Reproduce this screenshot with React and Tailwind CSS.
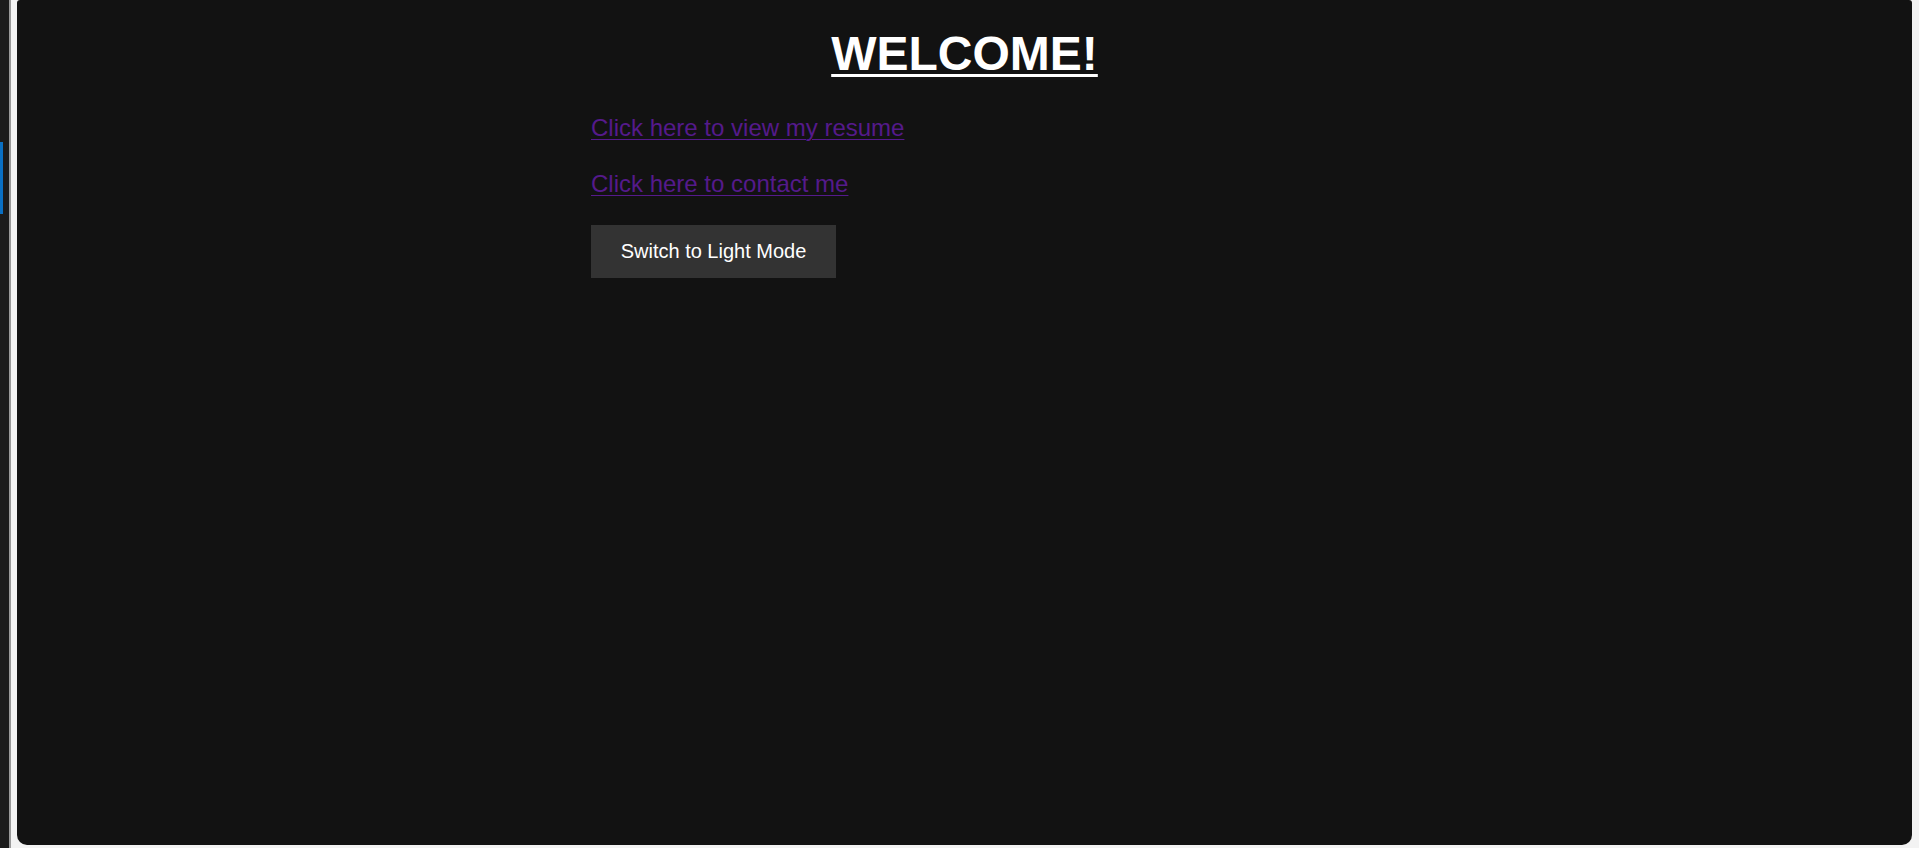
import React, { useState } from 'react';

const App = () => {
  const [dark, setDark] = useState(true);

  return (
    <div className="flex h-[848px] w-full overflow-hidden bg-[#1b1b1b] font-['Liberation_Sans',Arial,sans-serif]">
      <div className="relative w-[9px] shrink-0 bg-[#1b1b1b]">
        <div className="absolute left-0 top-[142px] h-[72px] w-[3px] bg-[#0a6fc2]" />
      </div>
      <div className="flex min-w-0 flex-1 border-l-2 border-[#9a9a9a] bg-[#f3f3f3] pb-[3px] pl-[6px] pr-[7px]">
        <div
          className={`flex flex-1 flex-col rounded-b-[10px] rounded-t-[3px] pt-[30px] ${
            dark ? 'bg-[#121212] text-white' : 'bg-white text-black'
          }`}
        >
          <h1 className="text-center text-[48px] font-bold leading-[48px] underline decoration-[3px] underline-offset-[4px]">
            WELCOME!
          </h1>
          <div className="flex flex-col items-start pl-[574px]">
            <a href="#resume" className="mt-[34px] text-[24px] leading-[32px] text-[#551a8b] underline decoration-1 underline-offset-[3px]">
              Click here to view my resume
            </a>
            <a href="#contact" className="mt-[24px] text-[24px] leading-[32px] text-[#551a8b] underline decoration-1 underline-offset-[3px]">
              Click here to contact me
            </a>
            <button
              onClick={() => setDark(!dark)}
              className={`mt-[25px] h-[53px] w-[245px] text-[20px] leading-[23px] ${
                dark ? 'bg-[#333333] text-white' : 'bg-[#e0e0e0] text-black'
              }`}
            >
              {dark ? 'Switch to Light Mode' : 'Switch to Dark Mode'}
            </button>
          </div>
        </div>
      </div>
    </div>
  );
};

export default App;
